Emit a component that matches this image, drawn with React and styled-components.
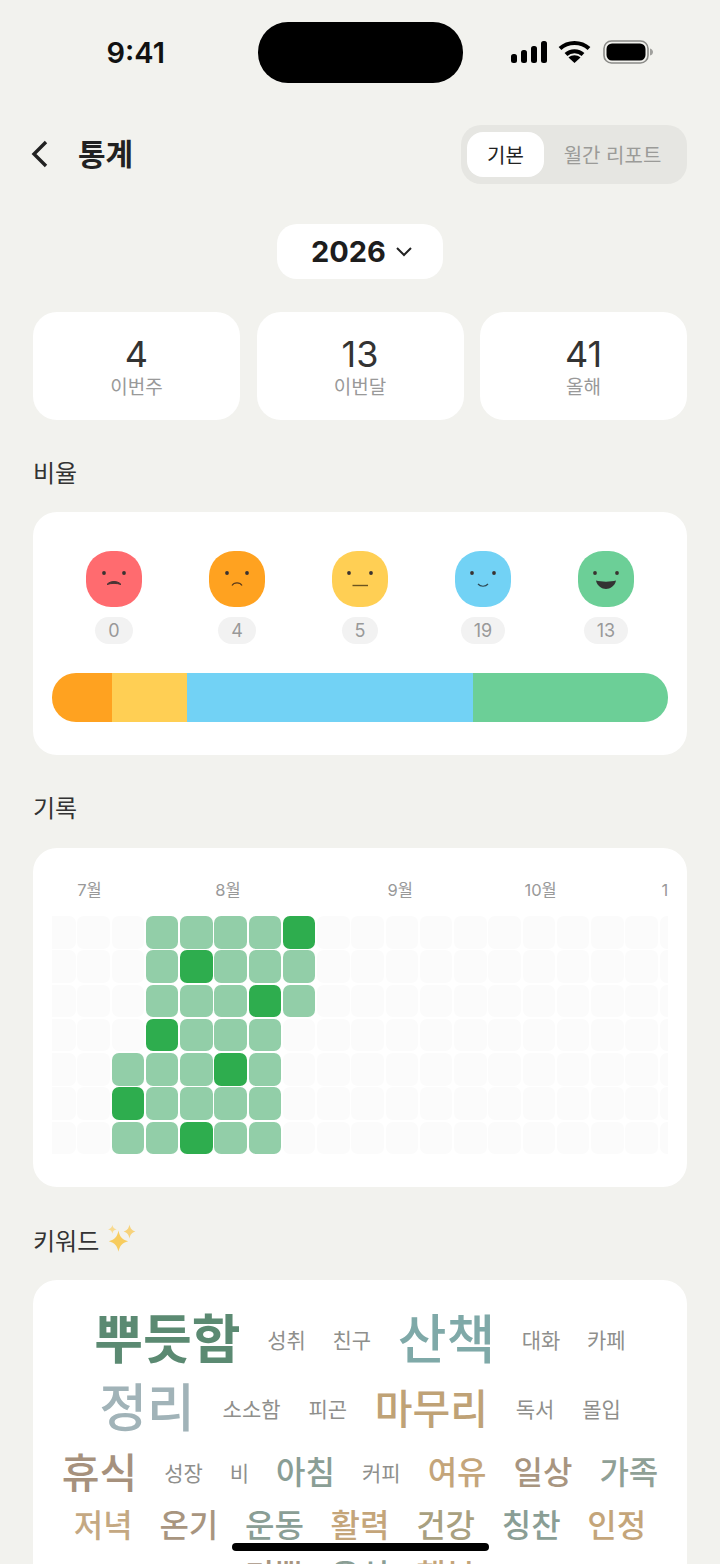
import React from "react";
import styled, { createGlobalStyle } from "styled-components";

const FONT = `Inter, "Noto Sans CJK KR", "Noto Sans", sans-serif`;

const GlobalStyle = createGlobalStyle`
  html, body { margin: 0; padding: 0; background: #f2f2ee; }
  * { box-sizing: border-box; }
`;

const Page = styled.div`
  position: relative;
  width: 720px;
  height: 1564px;
  overflow: hidden;
  background: #f2f2ee;
  font-family: ${FONT};
  color: #222;
`;

const StatusBar = styled.div`
  height: 83px;
  padding-top: 22px;
  display: grid;
  grid-template-columns: 258px 205px 1fr;
  align-items: center;
`;
const Time = styled.div`
  height: 61px;
  display: flex;
  align-items: center;
  justify-content: flex-end;
  padding-right: 93px;
  font-size: 29px;
  font-weight: 600;
  color: #111;
`;
const Island = styled.div`
  height: 61px;
  border-radius: 30px;
  background: #000;
`;
const StatusIcons = styled.div`
  display: flex;
  align-items: center;
  gap: 10px;
  padding-left: 48px;
  margin-top: -1px;
`;

const NavBar = styled.div`
  display: flex;
  align-items: center;
  justify-content: space-between;
  margin-top: 42px;
  padding: 0 33px 0 30px;
`;
const TitleWrap = styled.div`
  display: flex;
  align-items: center;
  gap: 28px;
`;
const Title = styled.h1`
  margin: 0 0 5px;
  font-size: 30px;
  font-weight: 700;
  color: #222;
`;
const Segment = styled.div`
  width: 226px;
  height: 59px;
  padding: 7px 6px;
  display: flex;
  border-radius: 20px;
  background: #e6e6e2;
`;
const SegmentItem = styled.div`
  display: flex;
  align-items: center;
  justify-content: center;
  height: 45px;
  border-radius: 16px;
  font-size: 20px;
  flex: ${(p) => (p.$active ? "0 0 77px" : "1")};
  background: ${(p) => (p.$active ? "#fff" : "transparent")};
  color: ${(p) => (p.$active ? "#222" : "#9b9b98")};
`;

const YearRow = styled.div`
  display: flex;
  justify-content: center;
  margin-top: 40px;
`;
const YearPill = styled.div`
  width: 166px;
  height: 55px;
  padding-left: 4px;
  display: flex;
  align-items: center;
  justify-content: center;
  gap: 9px;
  border-radius: 20px;
  background: #fff;
  font-size: 29px;
  font-weight: 700;
  color: #1d1d1d;
`;

const Content = styled.div`
  padding: 0 33px;
`;
const StatsRow = styled.div`
  display: grid;
  grid-template-columns: repeat(3, 207px);
  justify-content: space-between;
  margin-top: 33px;
`;
const StatCard = styled.div`
  height: 108px;
  padding-top: 2px;
  display: flex;
  flex-direction: column;
  align-items: center;
  justify-content: center;
  border-radius: 24px;
  background: #fff;
`;
const StatValue = styled.div`
  font-size: 36px;
  line-height: 42px;
  color: #333;
`;
const StatLabel = styled.div`
  font-size: 19px;
  line-height: 26px;
  color: #999;
`;

const SectionTitle = styled.div`
  display: flex;
  align-items: center;
  gap: 8px;
  height: 40px;
  padding-bottom: 2px;
  margin-top: ${(p) => p.$top}px;
  font-size: 24px;
  color: #333;
`;
const Card = styled.div`
  margin-top: ${(p) => p.$top}px;
  border-radius: 24px;
  background: #fff;
`;

const RatioCard = styled(Card)`
  height: 243px;
  padding: 39px 19px 0;
`;
const FaceRow = styled.div`
  display: grid;
  grid-template-columns: repeat(5, 123px);
  justify-content: center;
`;
const FaceCol = styled.div`
  display: flex;
  flex-direction: column;
  align-items: center;
  gap: 10px;
`;
const Face = styled.svg`
  width: 56px;
  height: 56px;
  display: block;
`;
const CountPill = styled.div`
  min-width: 36px;
  height: 27px;
  padding: 0 13px;
  border-radius: 14px;
  background: #f2f2f2;
  text-align: center;
  font-size: 18px;
  line-height: 28px;
  color: #999;
`;
const RatioBar = styled.div`
  display: flex;
  height: 49px;
  margin-top: 29px;
  border-radius: 24px;
  overflow: hidden;
`;
const RatioSegment = styled.div`
  flex: ${(p) => p.$count} 0 0;
  background: ${(p) => p.$color};
`;

const RecordCard = styled(Card)`
  height: 339px;
  padding: 28px 19px 0;
`;
const ScrollClip = styled.div`
  overflow: hidden;
`;
const MonthRow = styled.div`
  display: grid;
  grid-template-columns: repeat(20, 32.5px);
  column-gap: 1.75px;
  margin-left: -9px;
  height: 28px;
  margin-bottom: 12px;
  width: max-content;
`;
const Month = styled.div`
  grid-column: ${(p) => p.$col} / span 2;
  padding-left: ${(p) => p.$shift || 0}px;
  font-size: 16.5px;
  line-height: 28px;
  color: #999;
  white-space: nowrap;
`;
const HeatGrid = styled.div`
  display: grid;
  grid-auto-flow: column;
  grid-template-rows: repeat(7, 32.5px);
  grid-auto-columns: 32.5px;
  gap: 1.75px;
  margin-left: -9px;
  width: max-content;
`;
const Cell = styled.div`
  border-radius: 7px;
  background: ${(p) =>
    p.$level === 2 ? "#2ead4e" : p.$level === 1 ? "#92cea8" : "#fbfbfb"};
`;

const KeywordCard = styled(Card)`
  height: 320px;
  padding-top: 23px;
`;
const CloudRow = styled.div`
  display: flex;
  align-items: center;
  justify-content: center;
  height: ${(p) => p.$h}px;
  gap: ${(p) => p.$gap}px;
`;
const Word = styled.span`
  font-size: ${(p) => p.$size}px;
  line-height: 1;
  font-weight: ${(p) => p.$weight || 400};
  color: ${(p) => p.$color};
  white-space: nowrap;
`;

const HomeBar = styled.div`
  position: absolute;
  left: 232px;
  top: 1543px;
  width: 257px;
  height: 8px;
  border-radius: 4px;
  background: #000;
`;

const Signal = () => (
  <svg width="37" height="23" viewBox="0 0 37 23">
    <rect x="0" y="13" width="6" height="9" rx="2.5" fill="#000" />
    <rect x="10" y="9" width="6" height="13" rx="2.5" fill="#000" />
    <rect x="20" y="5" width="6" height="17" rx="2.5" fill="#000" />
    <rect x="30" y="0" width="6" height="22" rx="2.5" fill="#000" />
  </svg>
);
const Wifi = () => (
  <svg width="33" height="24" viewBox="0 0 33 24">
    <path d="M2 8.5C10 1 23 1 31 8.5" fill="none" stroke="#000" strokeWidth="4" />
    <path d="M8 14.5C12.5 10 20.5 10 25 14.5" fill="none" stroke="#000" strokeWidth="4" />
    <path d="M16.5 23L10.5 17.5C14 14.5 19 14.5 22.5 17.5Z" fill="#000" />
  </svg>
);
const Battery = () => (
  <svg width="52" height="24" viewBox="-2 0 52 24">
    <rect x="1" y="1" width="44" height="22" rx="7.5" fill="none" stroke="#8b8b88" strokeWidth="1.6" />
    <rect x="3.5" y="3.5" width="39" height="17" rx="5.5" fill="#000" />
    <path d="M47 8.5C49 9 50 10.5 50 12S49 15 47 15.5Z" fill="#a0a09d" />
  </svg>
);
const BackIcon = () => (
  <svg width="20" height="30" viewBox="0 0 20 30">
    <path d="M16 2L4 14L16 26" fill="none" stroke="#222" strokeWidth="3.4" />
  </svg>
);
const ChevronDown = () => (
  <svg width="18" height="12" viewBox="0 0 18 12">
    <path d="M2 2L9 9L16 2" fill="none" stroke="#222" strokeWidth="2" />
  </svg>
);
const Sparkles = () => (
  <svg width="30" height="30" viewBox="0 0 28 28">
    <path d="M10.700 6C11.800 11.800 14 14.500 19.700 16C14 17.500 11.800 20.200 10.700 26C9.600 20.200 7.400 17.500 1.700 16C7.400 14.500 9.600 11.800 10.700 6Z" fill="#f7cc5e" />
    <path d="M21 0.500C21.800 4.300 23 5.800 26.500 7C23 8.200 21.800 9.700 21 13.500C20.200 9.700 19 8.200 15.500 7C19 5.800 20.200 4.300 21 0.500Z" fill="#f7d27a" />
    <path d="M5 1C5.500 3.300 6.300 4.300 9 5C6.300 5.700 5.500 6.700 5 9C4.500 6.700 3.700 5.700 1 5C3.700 4.300 4.500 3.300 5 1Z" fill="#f8da90" />
  </svg>
);

const MOODS = [
  {
    color: "#ff6b6f",
    count: 0,
    mouth: <path d="M21 33.500C24 29.500 32 29.500 35 33.500C31 32 25 32 21 33.500Z" fill="#4a3434" stroke="#4a3434" strokeWidth="1" />,
    eyeGap: 10,
  },
  {
    color: "#ffa220",
    count: 4,
    mouth: <path d="M23 34.500C25 31 31 31 33 34.500" fill="none" stroke="#5a3a1a" strokeWidth="1.200" />,
    eyeGap: 10,
  },
  {
    color: "#ffcf54",
    count: 5,
    mouth: <path d="M20.500 34.500H36" fill="none" stroke="#6b5520" strokeWidth="1.400" />,
    eyeGap: 11,
  },
  {
    color: "#72d2f5",
    count: 19,
    mouth: <path d="M23 33C25.500 36 30.500 36 33 33" fill="none" stroke="#2f4a55" strokeWidth="1.200" />,
    eyeGap: 11,
  },
  {
    color: "#6ccf97",
    count: 13,
    mouth: <path d="M18 29.500C23 31 33 31 38 29.500C37 35 32 38 28 38C24 38 19 35 18 29.500Z" fill="#333" />,
    eyeGap: 11,
  },
];

const HEAT = {
  0: { 3: 1, 4: 1, 5: 1, 6: 1, 7: 2 },
  1: { 3: 1, 4: 2, 5: 1, 6: 1, 7: 1 },
  2: { 3: 1, 4: 1, 5: 1, 6: 2, 7: 1 },
  3: { 3: 2, 4: 1, 5: 1, 6: 1 },
  4: { 2: 1, 3: 1, 4: 1, 5: 2, 6: 1 },
  5: { 2: 2, 3: 1, 4: 1, 5: 1, 6: 1 },
  6: { 2: 1, 3: 1, 4: 2, 5: 1, 6: 1 },
};

const GRAY = "#8f8f8c";
const CLOUD = [
  {
    h: 74,
    gap: 26.6,
    words: [
      ["뿌듯함", 53, "#5b8a72", 700],
      ["성취", 21, GRAY],
      ["친구", 21, GRAY],
      ["산책", 53, "#7fa9a8", 500],
      ["대화", 21, GRAY],
      ["카페", 21, GRAY],
    ],
  },
  {
    h: 64,
    gap: 27.8,
    words: [
      ["정리", 52, "#a1b3b8", 500],
      ["소소함", 21, GRAY],
      ["피곤", 21, GRAY],
      ["마무리", 41, "#bfa276", 500],
      ["독서", 21, GRAY],
      ["몰입", 21, GRAY],
    ],
  },
  {
    h: 64,
    gap: 27,
    words: [
      ["휴식", 41, "#a6917d", 500],
      ["성장", 21, GRAY],
      ["비", 21, GRAY],
      ["아침", 32, "#8a9e95", 500],
      ["커피", 21, GRAY],
      ["여유", 32, "#c4a57a", 500],
      ["일상", 32, "#a8957f", 500],
      ["가족", 32, "#8fa096", 500],
    ],
  },
  {
    h: 42,
    gap: 26.7,
    words: [
      ["저녁", 32, "#c4a882", 500],
      ["온기", 32, "#a8957f", 500],
      ["운동", 32, "#8a9e95", 500],
      ["활력", 32, "#c4a57a", 500],
      ["건강", 32, "#a8a080", 500],
      ["칭찬", 32, "#8a9e95", 500],
      ["인정", 32, "#c4a57a", 500],
    ],
  },
  {
    h: 58,
    gap: 27,
    words: [
      ["기쁨", 32, "#a8957f", 500],
      ["음식", 32, "#8a9e95", 500],
      ["행복", 32, "#c4a57a", 500],
    ],
  },
];

export default function App() {
  const columns = Array.from({ length: 20 }, (_, c) => c);
  const rows = [0, 1, 2, 3, 4, 5, 6];
  return (
    <Page>
      <GlobalStyle />
      <StatusBar>
        <Time>9:41</Time>
        <Island />
        <StatusIcons>
          <Signal />
          <Wifi />
          <Battery />
        </StatusIcons>
      </StatusBar>

      <NavBar>
        <TitleWrap>
          <BackIcon />
          <Title>통계</Title>
        </TitleWrap>
        <Segment>
          <SegmentItem $active>기본</SegmentItem>
          <SegmentItem>월간 리포트</SegmentItem>
        </Segment>
      </NavBar>

      <YearRow>
        <YearPill>
          2026
          <ChevronDown />
        </YearPill>
      </YearRow>

      <Content>
        <StatsRow>
          <StatCard>
            <StatValue>4</StatValue>
            <StatLabel>이번주</StatLabel>
          </StatCard>
          <StatCard>
            <StatValue>13</StatValue>
            <StatLabel>이번달</StatLabel>
          </StatCard>
          <StatCard>
            <StatValue>41</StatValue>
            <StatLabel>올해</StatLabel>
          </StatCard>
        </StatsRow>

        <SectionTitle $top={32}>비율</SectionTitle>
        <RatioCard $top={20}>
          <FaceRow>
            {MOODS.map((m) => (
              <FaceCol key={m.color}>
                <Face viewBox="0 0 56 56">
                  <rect width="56" height="56" rx="25" fill={m.color} />
                  <circle cx={28 - m.eyeGap} cy="22" r="1.900" fill="#3a3230" />
                  <circle cx={28 + m.eyeGap} cy="22" r="1.900" fill="#3a3230" />
                  {m.mouth}
                </Face>
                <CountPill>{m.count}</CountPill>
              </FaceCol>
            ))}
          </FaceRow>
          <RatioBar>
            {MOODS.filter((m) => m.count > 0).map((m) => (
              <RatioSegment key={m.color} $count={m.count} $color={m.color} />
            ))}
          </RatioBar>
        </RatioCard>

        <SectionTitle $top={32}>기록</SectionTitle>
        <RecordCard $top={21}>
          <ScrollClip>
            <MonthRow>
              <Month $col={2}>7월</Month>
              <Month $col={6} $shift={1}>8월</Month>
              <Month $col={11} $shift={2}>9월</Month>
              <Month $col={15} $shift={2}>10월</Month>
              <Month $col={19} $shift={2}>11월</Month>
            </MonthRow>
            <HeatGrid>
              {columns.map((c) =>
                rows.map((r) => <Cell key={`${c}-${r}`} $level={HEAT[r][c] || 0} />)
              )}
            </HeatGrid>
          </ScrollClip>
        </RecordCard>

        <SectionTitle $top={33}>
          키워드
          <Sparkles />
        </SectionTitle>
        <KeywordCard $top={20}>
          {CLOUD.map((row, i) => (
            <CloudRow key={i} $h={row.h} $gap={row.gap}>
              {row.words.map(([text, size, color, weight]) => (
                <Word key={text} $size={size} $color={color} $weight={weight}>
                  {text}
                </Word>
              ))}
            </CloudRow>
          ))}
        </KeywordCard>
      </Content>

      <HomeBar />
    </Page>
  );
}
